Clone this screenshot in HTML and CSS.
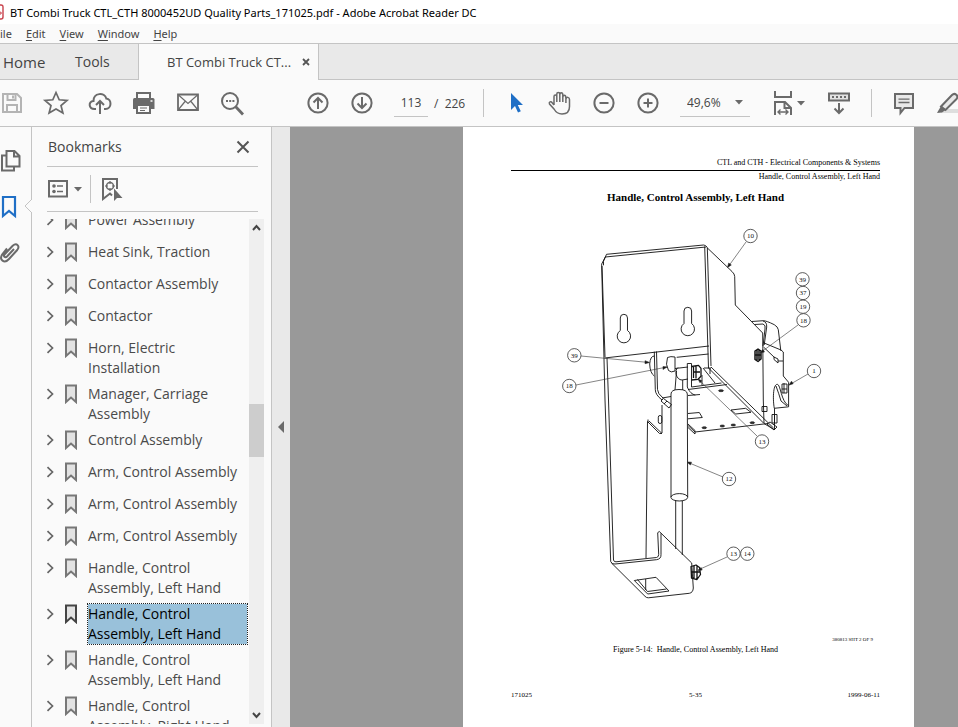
FILE: index.html
```html
<!DOCTYPE html>
<html lang="en">
<head>
<meta charset="utf-8">
<title>BT Combi Truck CTL_CTH 8000452UD Quality Parts_171025.pdf - Adobe Acrobat Reader DC</title>
<link rel="stylesheet" href="styles.css">
</head>
<body>
<svg class="defs" width="0" height="0" aria-hidden="true">
  <symbol id="chev" viewBox="0 0 8 12"><path d="M1.5 1.2 6.5 6 1.5 10.8" fill="none" stroke="#666" stroke-width="1.700"/></symbol>
  <symbol id="mark" viewBox="0 0 14 20"><path d="M2 1.5h10v16.500l-5-4.500-5 4.500z" fill="#e2e2e2" stroke="currentColor" stroke-width="2"/></symbol>
  <symbol id="caret" viewBox="0 0 8 5"><path d="M0 0h8L4 4.500z" fill="#6a6a6a"/></symbol>
</svg>
<header class="titlebar">
  <svg class="app-icon" viewBox="0 0 4 16"><path d="M0 1h1q2 0 2 2v10q0 2-2 2H0" fill="#fff" stroke="#c8414b" stroke-width="1.400"/><path d="M0 8q2 0 1 2H0" fill="none" stroke="#c8414b"/></svg>
  <span>BT Combi Truck CTL_CTH 8000452UD Quality Parts_171025.pdf - Adobe Acrobat Reader DC</span>
</header>
<nav class="menubar">
  <button class="menu-file">ile</button><button><u>E</u>dit</button><button><u>V</u>iew</button><button><u>W</u>indow</button><button><u>H</u>elp</button>
</nav>
<div class="tabs">
  <button class="tab home">Home</button><button class="tab tools">Tools</button>
  <div class="tab doc"><span>BT Combi Truck CT...</span><button class="close" aria-label="Close tab"><svg width="8" height="8" viewBox="0 0 8 8"><path d="M1 1l6 6M7 1 1 7" stroke="#555" stroke-width="1.800"/></svg></button></div>
</div>
<div class="toolbar">
  <div class="group files">
    <button aria-label="Save"><svg class="ic pale" viewBox="0 0 28 28"><path d="M5 5h14l4 4v14H5z"/><path d="M9.500 5v6h8V5M9 23v-7h10v7M15 6.500v3"/></svg></button>
    <button aria-label="Star"><svg class="ic" viewBox="0 0 28 28"><path d="M14 3.500 17.200 10.800 25 11.400 19 16.500 20.900 24 14 20 7.100 24 9 16.500 3 11.400 10.800 10.800z" stroke-width="1.700"/></svg></button>
    <button aria-label="Upload"><svg class="ic" viewBox="0 0 28 28"><path d="M10 20H8.500C2.500 20 2 12.500 7.500 12 7.500 3.500 18.500 3 20.300 9.500 26 10 26 20 19.500 20H18M14 25V12M10 16l4-4 4 4"/></svg></button>
    <button aria-label="Print"><svg class="ic" viewBox="0 0 28 28"><path d="M3 10.500q0-1.500 1.500-1.500h18.500q1.500 0 1.500 1.500V20H3z" fill="#6a6a6a" stroke="none"/><path d="M7 9V4h13v5" /><path d="M7 16h13v8H7z" fill="#fafafa"/><path d="M10 19h7M10 21.500h5" stroke-width="1.200"/><path d="M20.500 12h2" stroke="#fff" stroke-width="1.500"/></svg></button>
    <button aria-label="Email"><svg class="ic" viewBox="0 0 28 28"><path d="M4 5.500h20v15.500H4z" stroke-width="1.800"/><path d="M4.500 6 14 14.500l9.500-8.500M4.500 20.500 11 12.500M23.500 20.500 17 12.500" stroke-width="1.200"/></svg></button>
    <button aria-label="Search"><svg class="ic" viewBox="0 0 28 28"><circle cx="12" cy="12" r="8"/><path d="M17.500 17.500l7.500 8" stroke-width="2.800"/><path d="M8 12h2M11.200 12h2M14.400 12h2" stroke-width="2"/></svg></button>
  </div>
  <div class="group paging">
    <button aria-label="Previous page"><svg class="ic" viewBox="0 0 28 28"><circle cx="14" cy="14" r="9.600"/><path d="M14 20V9M9.500 13.500 14 9l4.500 4.500"/></svg></button>
    <button aria-label="Next page"><svg class="ic" viewBox="0 0 28 28"><circle cx="14" cy="14" r="9.600"/><path d="M14 8v11M9.500 14.500 14 19l4.500-4.500"/></svg></button>
    <input class="pageno" aria-label="Page number" value="113"><span class="total">/&nbsp; 226</span>
  </div>
  <div class="group view">
    <button aria-label="Select"><svg class="ic" viewBox="0 0 28 28"><path d="M9 4v17l4-4 3 6.500 2.800-1.300-3-6.200H21z" fill="#1f6fc6" stroke="none"/></svg></button>
    <button aria-label="Hand"><svg class="ic" viewBox="0 0 28 28"><path d="M8 16V7.500c0-2 2.800-2 2.800 0V5c0-2 3-2 3 0v1c0-3 3-3 3 0v2.500c0-3 3-3 3 0L20 10c.5-2.500 3.500-2 3.500.500V17.500c0 5-3 7.500-7.500 7.500-4 0-6-1.500-8-5L3.500 15c-1-2.200 1.500-3 2.500-1.500L8 16M10.800 7.500V13M13.800 6v7M16.800 7v6M19.900 8.500V14" stroke-width="1.500"/></svg></button>
    <button aria-label="Zoom out"><svg class="ic" viewBox="0 0 28 28"><circle cx="14" cy="14" r="9.600"/><path d="M9.500 14h9"/></svg></button>
    <button aria-label="Zoom in"><svg class="ic" viewBox="0 0 28 28"><circle cx="14" cy="14" r="9.600"/><path d="M9.500 14h9M14 9.500v9"/></svg></button>
    <div class="zoom"><select aria-label="Zoom level"><option>49,6%</option></select><svg class="caret"><use href="#caret"/></svg></div>
    <button class="fit" aria-label="Fit width"><svg class="ic" viewBox="0 0 28 28"><path d="M6 2v6h16V2M6 26V13h10l6 6v7M15.500 13v6H22"/><path d="M9 23h10M11.500 20.500 9 23l2.500 2.500M16.500 20.500 19 23l-2.500 2.500" stroke-width="1.400"/></svg><svg class="caret"><use href="#caret"/></svg></button>
    <button aria-label="Scrolling toolbar"><svg class="ic" viewBox="0 0 28 28"><path d="M4 4.500h20v7H4z" fill="#e2e2e2"/><path d="M7 8h14" stroke-dasharray="2 2"/><path d="M14 14v10M9.500 19.500 14 24l4.500-4.500"/></svg></button>
  </div>
  <div class="group notes">
    <button aria-label="Comment"><svg class="ic" viewBox="0 0 28 28"><path d="M5 5h18v14h-8.500L10.500 24v-5H5z" fill="#e9e9e9"/><path d="M8.500 10.200h11M8.500 13.500h11" stroke-width="1.300"/></svg></button>
    <button aria-label="Highlight"><svg class="ic" viewBox="0 0 28 28"><path d="M9 20h19v4H7z" fill="#dedede" stroke="none"/><path d="M7 17.500 18 6c3-3 7 1 4.500 4L11.500 21z" fill="#e9e9e9"/><path d="M7 17l4.500 4L8 23.500 3 24z" fill="#6a6a6a" stroke="none"/></svg></button>
  </div>
</div>
<main class="work">
  <nav class="rail">
    <button aria-label="Page thumbnails"><svg width="22" height="24" viewBox="0 0 22 24"><path d="M5.500 6.500H2v15h12v-3.500M6.500 2h8l5 5v10.500h-13zM14 2v5.500h5.500" fill="none" stroke="#6a6a6a" stroke-width="2"/></svg></button>
    <button aria-label="Bookmarks"><svg width="18" height="24" viewBox="0 0 18 24"><path d="M3 2h12v19l-6-5-6 5z" fill="none" stroke="#1f6fc6" stroke-width="2.200"/></svg></button>
    <button aria-label="Attachments"><svg width="20" height="24" viewBox="0 0 20 24"><path d="M14 8 7 15.500c-2 2-4-.5-2.300-2.300l8-8.500c4-3.500 7.500.500 4.500 4.300L9 18c-4.500 5-10.500 1-6.500-5L7 7.500" fill="none" stroke="#6a6a6a" stroke-width="2"/></svg></button>
    <svg class="notch" width="8" height="14" viewBox="0 0 8 14"><path d="M8 0 1 7l7 7" fill="#fafafa" stroke="#c4c4c4"/></svg>
  </nav>
  <aside class="panel">
    <div class="panel-head"><h2>Bookmarks</h2><button aria-label="Close panel"><svg width="14" height="14" viewBox="0 0 14 14"><path d="M1.500 1.500l11 11M12.500 1.500l-11 11" stroke="#555" stroke-width="2"/></svg></button></div>
    <div class="panel-tools">
      <button class="opts" aria-label="Options"><svg width="20" height="18" viewBox="0 0 20 18"><path d="M1 1h18v15.500H1z" fill="none" stroke="#6a6a6a" stroke-width="2"/><circle cx="6" cy="6" r="1.800" fill="#6a6a6a"/><circle cx="6" cy="11.500" r="1.800" fill="#6a6a6a"/><path d="M9 6h6M9 11.500h6" stroke="#6a6a6a" stroke-width="1.600"/></svg><svg class="caret"><use href="#caret"/></svg></button>
      <button class="find" aria-label="Find current bookmark"><svg width="22" height="24" viewBox="0 0 22 24"><path d="M11 18.500 9 16.500l-7 5.500V2h14v10" fill="none" stroke="#6a6a6a" stroke-width="2"/><circle cx="9" cy="9" r="3.500" fill="none" stroke="#6a6a6a" stroke-width="1.500"/><path d="M9 4v3M9 11v3M4 9h3M11 9h3" stroke="#6a6a6a" stroke-width="1.200"/><path d="M13 11.500V24l3-3h5.500z" fill="#6a6a6a"/></svg></button>
    </div>
    <div class="tree-wrap">
      <ul class="tree">
        <li><svg class="chev"><use href="#chev"/></svg><svg class="mark"><use href="#mark"/></svg><a href="#p">Power Assembly</a></li>
        <li><svg class="chev"><use href="#chev"/></svg><svg class="mark"><use href="#mark"/></svg><a href="#p">Heat Sink, Traction</a></li>
        <li><svg class="chev"><use href="#chev"/></svg><svg class="mark"><use href="#mark"/></svg><a href="#p">Contactor Assembly</a></li>
        <li><svg class="chev"><use href="#chev"/></svg><svg class="mark"><use href="#mark"/></svg><a href="#p">Contactor</a></li>
        <li><svg class="chev"><use href="#chev"/></svg><svg class="mark"><use href="#mark"/></svg><a href="#p">Horn, Electric<br>Installation</a></li>
        <li><svg class="chev"><use href="#chev"/></svg><svg class="mark"><use href="#mark"/></svg><a href="#p">Manager, Carriage<br>Assembly</a></li>
        <li><svg class="chev"><use href="#chev"/></svg><svg class="mark"><use href="#mark"/></svg><a href="#p">Control Assembly</a></li>
        <li><svg class="chev"><use href="#chev"/></svg><svg class="mark"><use href="#mark"/></svg><a href="#p">Arm, Control Assembly</a></li>
        <li><svg class="chev"><use href="#chev"/></svg><svg class="mark"><use href="#mark"/></svg><a href="#p">Arm, Control Assembly</a></li>
        <li><svg class="chev"><use href="#chev"/></svg><svg class="mark"><use href="#mark"/></svg><a href="#p">Arm, Control Assembly</a></li>
        <li><svg class="chev"><use href="#chev"/></svg><svg class="mark"><use href="#mark"/></svg><a href="#p">Handle, Control<br>Assembly, Left Hand</a></li>
        <li class="selected"><svg class="chev"><use href="#chev"/></svg><svg class="mark"><use href="#mark"/></svg><a href="#p">Handle, Control<br>Assembly, Left Hand</a></li>
        <li><svg class="chev"><use href="#chev"/></svg><svg class="mark"><use href="#mark"/></svg><a href="#p">Handle, Control<br>Assembly, Left Hand</a></li>
        <li><svg class="chev"><use href="#chev"/></svg><svg class="mark"><use href="#mark"/></svg><a href="#p">Handle, Control<br>Assembly, Right Hand</a></li>
      </ul>
      <div class="scroll">
        <button aria-label="Scroll up"><svg width="9" height="7" viewBox="0 0 9 7"><path d="M1 6l3.500-4L8 6" fill="none" stroke="#444" stroke-width="2"/></svg></button>
        <div class="track"><div class="thumb"></div></div>
        <button aria-label="Scroll down"><svg width="9" height="7" viewBox="0 0 9 7"><path d="M1 1l3.500 4L8 1" fill="none" stroke="#444" stroke-width="2"/></svg></button>
      </div>
    </div>
  </aside>
  <button class="collapse" aria-label="Collapse panel"><svg width="6" height="12" viewBox="0 0 6 12"><path d="M6 0v12L0 6z" fill="#6a6a6a"/></svg></button>
  <section class="canvas">
    <article class="page" id="p">
      <p class="running">CTL and CTH - Electrical Components &amp; Systems</p>
      <p class="running second">Handle, Control Assembly, Left Hand</p>
      <h1>Handle, Control Assembly, Left Hand</h1>
      <svg class="drawing" viewBox="511 212 369 420" role="img" aria-label="Exploded view of the handle control assembly">
        <g class="ln">
          <path d="M606.500 254.300 703.500 245q2 0 3.500 2M605.300 257 706 247M606.500 254.300l-3 7v4M605.300 257l-3.600 7V266L605 400l5.700 161.500M602 266l3 91"/>
          <path d="M604.500 358 709 346M676.700 357.300 708.500 354M607 358l1.500 42 5 160" />
          <path d="M704.700 246.500 708.500 368M707.300 247.500 711 366" />
          <path d="M620.300 330.500V318q0-3.700 3.600-3.700t3.600 3.700v12.500M684 323.500V311q0-3.700 3.800-3.700t3.800 3.700v12.500"/>
          <path d="M620.300 330.500a6.700 6.700 0 1 0 7.200 0M684 323.500a6.700 6.700 0 1 0 7.600 0"/>
          <path d="M706.700 247.300 732 271.500q2.700 2.500 2.700 5l.6 28.500 27.400 28 .6 67 .7 23"/>
          <path d="M654.300 351.700l1 38q0 5 6.700 10.300M656.500 351.500l1 38q0 4 5.500 8.500M654.300 356q-4 0-4.600 8 .3 9 4.600 12"/>
          <path d="M675 357v14q-4 2-6.500-.5-3.500-6-1-13 3-1.500 7.500-.5zM675 368.500l13-1.500M688 379l-6 1c-6 0-8-10-4-12.500M676.500 371 675 390M682.700 380v10"/>
          <path d="M671 394q0-4.500 8-4.500t8.300 4.500L687.700 497M671 394v103"/><ellipse cx="679.300" cy="497.300" rx="8.400" ry="3.700"/>
          <path d="M675.700 500.500V549M682.300 500.500V555"/>
          <path d="M687.300 387v-23.500h4.200V387M687.300 387c2 5 5 7.500 8 8M691.500 387l30-4M688 389.500l39-5M662 398l9-1.500M688 395.500l12-1"/>
          <path d="M691.500 366.500l7-1.200 2.500 3v8l-3 3-6.500.7M693.500 367v11M696 366.500v12M694 372h6" stroke-width="1.300"/>
          <path d="M703 368l12 15M708.500 368 764 423.500l10 6M711 367l62.500 61M702 375v10M704 368h7M710 368v6"/>
          <path d="M695 432l73-8.500M688 424l7 6.500v3.500l-7-6.500M688 425.500l7 6.500"/>
          <path d="M688 413.500l11.300-1 3 5-14.300 1.300M731 410l14.700-1.700 5.300 4-15.300 1.700z"/>
          <path d="M661 401l2.500-2.500 8 6-2.500 3.500zM664 404l3-3M662 405v28M647.500 421.500 646 558M647.500 421.500l12 12h2.500M648 419.500v3M649 421l13 12.500"/>
          <rect x="658.300" y="415.500" width="3.500" height="8" rx="1.700"/>
          <path d="M751.700 321.500l11.600-.8q3 0 11 4 3.500 2 4 5l2.500 21M754.500 324.500l8.500-.5q3 1 2 5l-2 17M763 321q4 1 3.700 6l-2.500 18"/>
          <path d="M763.300 342.700 781 350l2.300 2v24l5.300 6.300v24.500l-14.300 1.500c-1.500-8-1.500-24 3-24 3.500.3 3.500 17 11.300 21.500M763.500 347l11 10.500M778 361h5M774.500 408.300v21.500M776 386q3 8 5 15l6 5"/>
          <path d="M774 357l4 2v4l-4-3.500z"/>
          <path d="M755 351l3-2 3 2v8l-3 2.500-3-2zM757 350v11M759 350v11M755 355h6" stroke-width="1.500"/>
          <path d="M782 384h5v9h-5zM784 383v10M782 389h5"/>
          <path d="M762 406.500h5v5h-5zM772 414.500h5v8.500h-5zM774.500 415v8M767 424l3-2 7 5-3 3z"/>
          <path d="M610.700 561.500q1 3 4.300 2.500l41.500-4.300q4.700-.7 4.500-5V533.300M613.500 560q.5 2 2.500 1.800l40.500-4.300q2.300-.5 2.200-3l-1-21.800 1.600-1.200L691.700 563l1.600 25q-.3 4.700-4 5.300l-41 4.500q-2 0-3.300-1.500L611.500 563"/>
          <path d="M634.300 580.500l21.700-3.200 13 13.700-21.300 3zM637.500 579.500l10 12 19-2.500M645.700 579v11"/>
          <path d="M691 566.500l5-1.500 3.500 2.500 1 7-3.500 5-5.500-1.500zM694 566v13M697 566v13M691 572h9" stroke-width="1.300"/>
        </g>
        <g class="holes"><ellipse cx="721" cy="390.700" rx="2.500" ry="1"/><ellipse cx="704.300" cy="427.700" rx="2.300" ry="1"/><ellipse cx="722.300" cy="426" rx="2.300" ry="1"/><ellipse cx="733.300" cy="425" rx="2.300" ry="1"/><ellipse cx="752.300" cy="422.700" rx="2.300" ry="1"/></g>
        <g class="leaders">
          <path d="M746 242 728 267M798 325 760 353M581 356l68 6.500M576 385l91-18M808 374l-19 11M757 436 698 379M723 477l-36-15M727 557l-29 13"/>
          <path class="heads" d="M727.500 267.500l1.200-4.500 2.600 2zM760 353l2.800-3.500 1.700 2.500zM649.500 362.500l-4.500 1.200v-3zM667 367l-4 2.500v-3zM789 385l2.500-3.800 1.700 2.600zM698 379l4 1.800-2 2zM687 462l4.500.2-1.100 2.800zM698 570.500l3-3 1.200 2.500z"/>
        </g>
        <g class="balloons">
          <circle cx="750.500" cy="236" r="6.700"/><circle cx="802.500" cy="279.300" r="6.700"/><circle cx="803" cy="293" r="6.700"/><circle cx="803" cy="306.700" r="6.700"/><circle cx="803.500" cy="320.300" r="6.700"/><circle cx="574.300" cy="355.300" r="6.700"/><circle cx="569.300" cy="386" r="6.700"/><circle cx="814" cy="371" r="6.700"/><circle cx="762" cy="441.500" r="6.700"/><circle cx="729" cy="479" r="6.700"/><circle cx="733.500" cy="553.700" r="6.700"/><circle cx="747.300" cy="553.700" r="6.700"/>
        </g>
        <g class="nums">
          <text x="750.500" y="238.200">10</text><text x="802.500" y="281.500">39</text><text x="803" y="295.200">37</text><text x="803" y="308.900">19</text><text x="803.500" y="322.500">18</text><text x="574.300" y="357.500">39</text><text x="569.300" y="388.200">18</text><text x="814" y="373.200">1</text><text x="762" y="443.700">13</text><text x="729" y="481.200">12</text><text x="733.500" y="555.900">13</text><text x="747.300" y="555.900">14</text>
        </g>
      </svg>
      <p class="sheet">380813 SHT 2 OF 9</p>
      <p class="caption">Figure 5-14:&nbsp; Handle, Control Assembly, Left Hand</p>
      <footer><span>171025</span><span>5-35</span><span>1999-06-11</span></footer>
    </article>
  </section>
</main>
</body>
</html>
```
FILE: styles.css
```css
* { box-sizing: border-box; }
body {
  margin: 0;
  height: 100vh;
  overflow: hidden;
  display: flex;
  flex-direction: column;
  background: #fafafa;
  color: #444;
  font-family: "Open Sans", "Noto Sans", sans-serif;
  font-size: 14px;
}
button, input, select {
  font: inherit;
  color: inherit;
  border: 0;
  padding: 0;
  margin: 0;
  background: none;
}
svg { display: block; flex: none; }
.defs { position: absolute; }
h1, h2, p, ul { margin: 0; padding: 0; }

.titlebar {
  display: flex;
  align-items: center;
  gap: 6px;
  height: 24px;
  flex: none;
  background: #fff;
  color: #000;
  font-family: "Noto Sans", "Open Sans", sans-serif;
  font-size: 11px;
  white-space: nowrap;
}
.app-icon { width: 4px; height: 16px; }

.menubar {
  display: flex;
  align-items: center;
  gap: 14px;
  height: 18px;
  margin-bottom: 1px;
  flex: none;
  font-family: "Noto Sans", "Open Sans", sans-serif;
  font-size: 11px;
}
.menubar u { text-underline-offset: 2px; }

.tabs {
  display: flex;
  height: 37px;
  flex: none;
  background: #e9e9e9;
  border-top: 1px solid #c4c4c4;
  border-bottom: 1px solid #c4c4c4;
}
.tab { display: flex; align-items: center; }
.home { padding-left: 3px; width: 75px; font-size: 15px; }
.tools { width: 63px; }
.doc {
  width: 181px;
  margin-bottom: -1px;
  padding-left: 28px;
  gap: 11px;
  background: #fafafa;
  border: solid #c4c4c4;
  border-width: 0 1px;
  font-size: 13px;
  white-space: nowrap;
}

.toolbar {
  display: flex;
  align-items: center;
  height: 47px;
  flex: none;
  overflow: hidden;
  border-bottom: 1px solid #c4c4c4;
  font-size: 12px;
}
.group { display: flex; align-items: center; flex: none; }
.group button {
  width: 44px;
  height: 28px;
  display: flex;
  align-items: center;
  justify-content: center;
}
.ic {
  width: 28px;
  height: 28px;
  fill: none;
  stroke: #6a6a6a;
  stroke-width: 2;
}
.pale { stroke: #b4b4b4; }
.caret { width: 8px; height: 5px; }
.files { margin-left: -10px; }
.paging { margin-left: 42px; }
.pageno {
  width: 34px;
  height: 28px;
  margin: 0 6px 0 10px;
  text-align: center;
  border-bottom: 1px solid #c4c4c4;
}
.total { width: 49px; }
.view { border-left: 1px solid #c4c4c4; padding-left: 10px; }
.zoom {
  display: flex;
  align-items: center;
  width: 70px;
  height: 28px;
  margin: 0 16px 0 10px;
  padding: 0 7px;
  border-bottom: 1px solid #c4c4c4;
}
.zoom select { appearance: none; flex: 1; }
.group .fit { width: 42px; margin-right: 9px; }
.notes { border-left: 1px solid #c4c4c4; margin-left: 10px; padding-left: 10px; }

.work { display: flex; flex: 1; min-height: 0; }
.rail {
  position: relative;
  width: 32px;
  flex: none;
  display: flex;
  flex-direction: column;
  gap: 22px;
  padding-top: 22px;
  border-right: 1px solid #c4c4c4;
}
.rail button { width: 24px; height: 24px; }
.notch { position: absolute; right: -1px; top: 72px; }

.panel {
  width: 240px;
  flex: none;
  display: flex;
  flex-direction: column;
  border-right: 1px solid #c4c4c4;
}
.panel-head, .panel-tools {
  display: flex;
  align-items: center;
  margin: 0 13px 0 15px;
  border-bottom: 1px solid #c4c4c4;
}
.panel-head { height: 40px; justify-content: space-between; padding-right: 8px; }
.panel-head h2 { font-size: 14px; font-weight: 400; padding-left: 1px; }
.panel-tools { height: 45px; }
.opts { display: flex; align-items: center; gap: 6px; width: 44px; height: 28px; padding-left: 1px; border-right: 1px solid #c4c4c4; }
.find { padding-left: 10px; }
.panel button { flex: none; }
.tree-wrap {
  display: flex;
  flex: 1;
  min-height: 0;
  overflow: hidden;
  margin: 7px 7px 3px 14px;
}
.tree { flex: 1; list-style: none; margin-top: -9px; line-height: 20px; }
.tree li {
  display: flex;
  min-height: 32px;
  padding-bottom: 6px;
  color: #777;
}
.tree a { color: #4a4a4a; text-decoration: none; white-space: nowrap; flex: 1; margin-right: 2px; }
.chev { width: 8px; height: 12px; margin: 4px 10px 0 0; }
.mark { width: 14px; height: 20px; margin-right: 10px; }
.tree .selected { color: #444; }
.tree .selected a { background: #99c1da; color: #000; outline: 1px dotted #222; }
.scroll { width: 15px; display: flex; flex-direction: column; background: #efefef; }
.scroll button { height: 17px; display: flex; align-items: center; justify-content: center; }
.track { flex: 1; }
.thumb { height: 53px; background: #cdcdcd; margin-top: 168px; }

.collapse {
  width: 18px;
  flex: none;
  display: flex;
  align-items: center;
  justify-content: center;
  background: #e9e9e9;
}
.canvas { flex: 1; min-width: 0; display: flex; background: #999; overflow: hidden; }
.page {
  width: 451px;
  flex: none;
  margin-left: 173px;
  padding: 31px 34px 0 48px;
  background: #fff;
  color: #000;
  font-family: "Liberation Serif", serif;
  font-size: 8px;
  line-height: 10px;
}
.running { text-align: right; padding-bottom: 2px; border-bottom: 1px solid #000; }
.running.second { padding-top: 1px; border: 0; }
.page h1 { font-size: 11px; line-height: 14px; text-align: center; margin-top: 6px; }
.drawing { width: 100%; margin-top: 8px; }
.ln, .leaders { fill: none; stroke: #111; stroke-width: 0.9; stroke-linejoin: round; }
.leaders { stroke: #333; stroke-width: 0.6; }
.leaders .heads { fill: #111; }
.holes { fill: #333; stroke: #111; stroke-width: 0.6; }
.balloons { fill: #fff; stroke: #333; stroke-width: 0.8; }
.nums { font-size: 7px; text-anchor: middle; fill: #111; }
.sheet { font-size: 5px; text-align: right; padding-right: 7px; margin-top: 3px; }
.caption { text-align: center; }
footer { display: grid; grid-template-columns: 1fr auto 1fr; margin-top: 35px; font-size: 7px; }
footer span:last-child { text-align: right; }
```
